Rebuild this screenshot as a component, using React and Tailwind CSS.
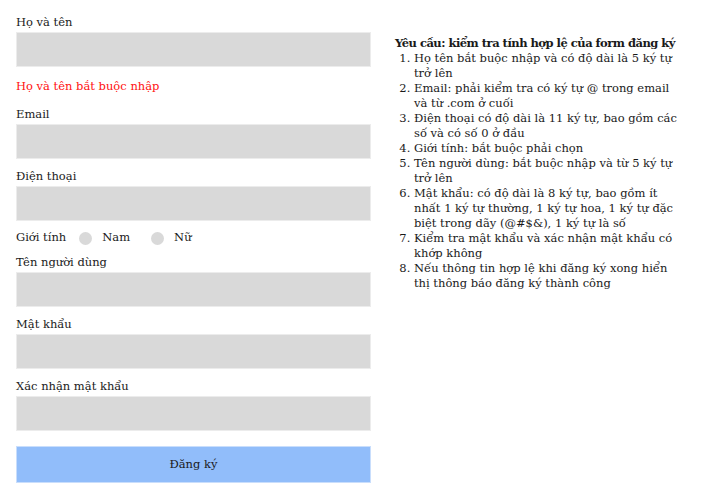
const fields = [
  { label: "Email" },
  { label: "Điện thoại" },
];

const rules = [
  "Họ tên bắt buộc nhập và có độ dài là 5 ký tự trở lên",
  "Email: phải kiểm tra có ký tự @ trong email và từ .com  ở cuối",
  "Điện thoại có độ dài là 11 ký tự, bao gồm các số và có số 0 ở đầu",
  "Giới tính: bắt buộc phải chọn",
  "Tên người dùng: bắt buộc nhập và từ 5 ký tự trở lên",
  "Mật khẩu: có độ dài là 8 ký tự, bao gồm ít nhất 1 ký tự thường, 1 ký tự hoa, 1 ký tự đặc biệt trong dãy (@#$&), 1 ký tự là số",
  "Kiểm tra mật khẩu và xác nhận mật khẩu có khớp không",
  "Nếu thông tin hợp  lệ khi đăng ký xong hiển thị thông báo đăng ký thành công",
];

function Field({ label, type = "text" }) {
  return (
    <div className="mb-[8px]">
      <label className="block leading-[19px]">{label}</label>
      <input
        type={type}
        className="block w-full h-[35px] bg-[#d9d9d9] border border-[#ececec] outline-none"
      />
    </div>
  );
}

function Radio({ label }) {
  return (
    <label className="flex items-center">
      <span className="w-[13px] h-[13px] rounded-full bg-[#d9d9d9] ml-[13px] mr-[10px]" />
      <span>{label}</span>
    </label>
  );
}

export default function App() {
  return (
    <div
      className="flex gap-6 pl-4 pr-6 pt-[13px] text-[11.5px] text-[#1a1a1a] bg-white min-h-[499px]"
      style={{ fontFamily: '"DejaVu Serif", serif' }}
    >
      <form className="w-[355px] shrink-0">
        <Field label="Họ và tên" />
        <p className="text-[#ff1010] leading-[19px] pt-[2px] mb-[9px]">
          Họ và tên bắt buộc nhập
        </p>
        {fields.map((f) => (
          <Field key={f.label} label={f.label} />
        ))}
        <div className="flex items-center h-[18px] mb-[6px]">
          <span>Giới tính</span>
          <Radio label="Nam" />
          <span className="w-[8px]" />
          <Radio label="Nữ" />
        </div>
        <Field label="Tên người dùng" />
        <Field label="Mật khẩu" type="password" />
        <Field label="Xác nhận mật khẩu" type="password" />
        <button
          type="button"
          className="block w-full h-[37px] mt-[15px] bg-[#91bdfa] border border-[#c9defc]"
        >
          Đăng ký
        </button>
      </form>

      <div className="flex-1 pt-[23px] leading-[15px]">
        <p className="font-bold tracking-[-0.5px] whitespace-nowrap">
          Yêu cầu: kiểm tra tính hợp lệ của form đăng ký
        </p>
        <ol className="list-decimal pl-[19px]">
          {rules.map((r) => (
            <li key={r}>{r}</li>
          ))}
        </ol>
      </div>
    </div>
  );
}
